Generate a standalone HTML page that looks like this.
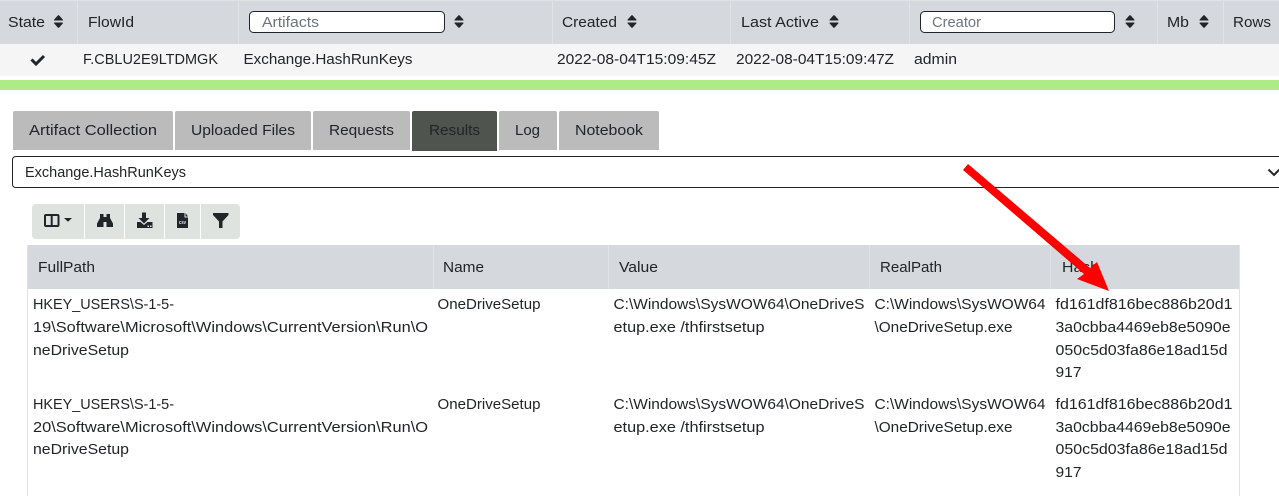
<!DOCTYPE html>
<html>
<head>
<meta charset="utf-8">
<style>
html,body{margin:0;padding:0;width:1279px;height:496px;overflow:hidden;background:#fff}
svg{display:block}
text{font-family:"Liberation Sans",sans-serif;font-size:14.6px;fill:#212529}
.t{font-size:15.2px}
.p{fill:#6c757d}
</style>
</head>
<body>
<svg width="1279" height="496" viewBox="0 0 1279 496" xmlns="http://www.w3.org/2000/svg">
<defs>
<g id="sort"><path d="M-3.800 -1 H3.800 Q4.900 -1 4.300 -2 L0.700 -6 Q0 -6.800 -0.700 -6 L-4.300 -2 Q-4.900 -1 -3.800 -1Z M-3.800 1 H3.800 Q4.900 1 4.300 2 L0.700 6 Q0 6.800 -0.700 6 L-4.300 2 Q-4.900 1 -3.800 1Z" fill="#212529"/></g>
</defs>

<!-- Top table header -->
<rect x="0" y="0" width="1279" height="44" fill="#d5d8dc"/>
<rect x="0" y="0" width="1279" height="1" fill="#e0e4e4"/>
<g fill="#dfe3e5">
<rect x="77" y="0" width="1" height="44"/><rect x="238" y="0" width="1" height="44"/><rect x="552" y="0" width="1" height="44"/><rect x="730" y="0" width="1" height="44"/><rect x="909" y="0" width="1" height="44"/><rect x="1157" y="0" width="1" height="44"/><rect x="1223" y="0" width="1" height="44"/>
</g>
<text x="8" y="27" textLength="37" lengthAdjust="spacingAndGlyphs">State</text>
<use href="#sort" x="58.500" y="21.500"/>
<text x="88" y="27" textLength="46" lengthAdjust="spacingAndGlyphs">FlowId</text>
<rect x="249.500" y="11.500" width="195" height="21" rx="4" fill="#fff" stroke="#212529"/>
<text class="p" x="262" y="27" textLength="57" lengthAdjust="spacingAndGlyphs">Artifacts</text>
<use href="#sort" x="459" y="21.500"/>
<text x="562" y="27" textLength="55" lengthAdjust="spacingAndGlyphs">Created</text>
<use href="#sort" x="632" y="21.500"/>
<text x="741" y="27" textLength="78" lengthAdjust="spacingAndGlyphs">Last Active</text>
<use href="#sort" x="834" y="21.500"/>
<rect x="920.500" y="11.500" width="194" height="21" rx="4" fill="#fff" stroke="#212529"/>
<text class="p" x="932" y="27" textLength="49" lengthAdjust="spacingAndGlyphs">Creator</text>
<use href="#sort" x="1130" y="21.500"/>
<text x="1167" y="27" textLength="22" lengthAdjust="spacingAndGlyphs">Mb</text>
<use href="#sort" x="1204" y="21.500"/>
<text x="1233" y="27" textLength="38" lengthAdjust="spacingAndGlyphs">Rows</text>

<!-- Row -->
<rect x="0" y="44" width="1279" height="32" fill="#f5f5f5"/>
<path d="M31.500 59.500 L36 64 L44 56" fill="none" stroke="#212529" stroke-width="3"/>
<text x="83" y="64" textLength="135" lengthAdjust="spacingAndGlyphs">F.CBLU2E9LTDMGK</text>
<text x="243.500" y="64" textLength="169" lengthAdjust="spacingAndGlyphs">Exchange.HashRunKeys</text>
<text x="557" y="64" textLength="159" lengthAdjust="spacingAndGlyphs">2022-08-04T15:09:45Z</text>
<text x="736" y="64" textLength="158" lengthAdjust="spacingAndGlyphs">2022-08-04T15:09:47Z</text>
<text x="914" y="64" textLength="43" lengthAdjust="spacingAndGlyphs">admin</text>

<!-- Green bar -->
<rect x="0" y="80" width="1279" height="10" fill="#aeea85"/>

<!-- Tabs -->
<g fill="#bbbbbb">
<path d="M13 150V113q0-2 2-2H171q2 0 2 2V150Z"/>
<path d="M175 150V113q0-2 2-2H309q2 0 2 2V150Z"/>
<path d="M313 150V113q0-2 2-2H408q2 0 2 2V150Z"/>
<path d="M499 150V113q0-2 2-2H555q2 0 2 2V150Z"/>
<path d="M559 150V113q0-2 2-2H657q2 0 2 2V150Z"/>
</g>
<path d="M412 151V113q0-2 2-2H495q2 0 2 2V151Z" fill="#50544f"/>
<text class="t" x="29" y="135" textLength="128" lengthAdjust="spacingAndGlyphs">Artifact Collection</text>
<text class="t" x="191" y="135" textLength="104" lengthAdjust="spacingAndGlyphs">Uploaded Files</text>
<text class="t" x="329" y="135" textLength="65" lengthAdjust="spacingAndGlyphs">Requests</text>
<text class="t" x="429" y="135" textLength="51" lengthAdjust="spacingAndGlyphs">Results</text>
<text class="t" x="515" y="135" textLength="25" lengthAdjust="spacingAndGlyphs">Log</text>
<text class="t" x="575" y="135" textLength="68" lengthAdjust="spacingAndGlyphs">Notebook</text>

<!-- Select -->
<path d="M1285 156.500H16q-3.500 0-3.500 3.500V184q0 3.500 3.500 3.500H1285" fill="#fff" stroke="#212529"/>
<text x="25" y="177" textLength="161" lengthAdjust="spacingAndGlyphs">Exchange.HashRunKeys</text>
<path d="M1268.500 169.500 L1274 175 L1279.500 169.500" fill="none" stroke="#212529" stroke-width="2"/>

<!-- Toolbar -->
<path d="M36 204H84V239H36q-4 0-4-4V208q0-4 4-4Z" fill="#dfe3e0"/>
<rect x="85" y="204" width="39" height="35" fill="#dfe3e0"/>
<rect x="125" y="204" width="39" height="35" fill="#dfe3e0"/>
<rect x="165" y="204" width="35" height="35" fill="#dfe3e0"/>
<path d="M201 204H236q4 0 4 4V235q0 4-4 4H201Z" fill="#dfe3e0"/>
<!-- columns icon -->
<rect x="45" y="215" width="13.500" height="11" rx="1" fill="none" stroke="#212529" stroke-width="2"/>
<rect x="50.700" y="215" width="2" height="11" fill="#212529"/>
<path d="M64 218H72L68 221.800Z" fill="#212529"/>
<!-- binoculars -->
<path d="M100 214h3.500v13h-6.500v-3.500l3-5.500Z" fill="#212529"/>
<path d="M110 214h-3.500v13h6.500v-3.500l-3-5.500Z" fill="#212529"/>
<rect x="103" y="217" width="4" height="5" fill="#212529"/>
<!-- download -->
<path d="M142 212.500h4v5.500h3.500l-5.500 5.500-5.500-5.500h3.500Z" fill="#212529"/>
<path d="M137 222h3.500l3.500 3 3.500-3h5v6h-15.500Z" fill="#212529"/>
<rect x="147.500" y="225.500" width="1.500" height="1.500" fill="#dfe3e0"/><rect x="150" y="225.500" width="1.500" height="1.500" fill="#dfe3e0"/>
<!-- csv -->
<path d="M177 213h7.500v4.500h3.500v10.500h-11Z" fill="#212529"/>
<path d="M185.500 213l2.500 3.500h-2.500Z" fill="#212529"/>
<text x="179" y="224" textLength="7" lengthAdjust="spacingAndGlyphs" style="font-size:5.500px;font-weight:bold;fill:#dfe3e0">csv</text>
<!-- filter -->
<path d="M213 213h15.500v2l-6 6.500V228h-3.500v-6.500l-6-6.500Z" fill="#212529"/>

<!-- Results table -->
<rect x="27" y="245" width="1213" height="44" fill="#d5d8dc"/>
<g fill="#dfe3e5">
<rect x="433" y="245" width="1" height="44"/><rect x="608" y="245" width="1" height="44"/><rect x="869" y="245" width="1" height="44"/><rect x="1050" y="245" width="1" height="44"/>
<rect x="27" y="245" width="1" height="251"/><rect x="1239" y="245" width="1" height="251"/>
</g>
<text x="38" y="272" textLength="57" lengthAdjust="spacingAndGlyphs">FullPath</text>
<text x="443" y="272" textLength="41" lengthAdjust="spacingAndGlyphs">Name</text>
<text x="619" y="272" textLength="39" lengthAdjust="spacingAndGlyphs">Value</text>
<text x="880" y="272" textLength="62" lengthAdjust="spacingAndGlyphs">RealPath</text>
<text x="1062" y="272" textLength="37" lengthAdjust="spacingAndGlyphs">Hash</text>

<text x="33" y="309" textLength="141" lengthAdjust="spacingAndGlyphs">HKEY_USERS\S-1-5-</text>
<text x="33" y="332" textLength="395" lengthAdjust="spacingAndGlyphs">19\Software\Microsoft\Windows\CurrentVersion\Run\O</text>
<text x="33" y="355" textLength="96" lengthAdjust="spacingAndGlyphs">neDriveSetup</text>
<text x="437.500" y="309" textLength="103" lengthAdjust="spacingAndGlyphs">OneDriveSetup</text>
<text x="613.500" y="309" textLength="251" lengthAdjust="spacingAndGlyphs">C:\Windows\SysWOW64\OneDriveS</text>
<text x="613.500" y="332" textLength="151" lengthAdjust="spacingAndGlyphs">etup.exe /thfirstsetup</text>
<text x="874.500" y="309" textLength="171" lengthAdjust="spacingAndGlyphs">C:\Windows\SysWOW64</text>
<text x="874.500" y="332" textLength="138" lengthAdjust="spacingAndGlyphs">\OneDriveSetup.exe</text>
<text x="1055.500" y="309" textLength="177" lengthAdjust="spacingAndGlyphs">fd161df816bec886b20d1</text>
<text x="1055.500" y="332" textLength="175" lengthAdjust="spacingAndGlyphs">3a0cbba4469eb8e5090e</text>
<text x="1055.500" y="355" textLength="172" lengthAdjust="spacingAndGlyphs">050c5d03fa86e18ad15d</text>
<text x="1055.500" y="377" textLength="26" lengthAdjust="spacingAndGlyphs">917</text>

<text x="33" y="409" textLength="141" lengthAdjust="spacingAndGlyphs">HKEY_USERS\S-1-5-</text>
<text x="33" y="432" textLength="395" lengthAdjust="spacingAndGlyphs">20\Software\Microsoft\Windows\CurrentVersion\Run\O</text>
<text x="33" y="454" textLength="96" lengthAdjust="spacingAndGlyphs">neDriveSetup</text>
<text x="437.500" y="409" textLength="103" lengthAdjust="spacingAndGlyphs">OneDriveSetup</text>
<text x="613.500" y="409" textLength="251" lengthAdjust="spacingAndGlyphs">C:\Windows\SysWOW64\OneDriveS</text>
<text x="613.500" y="432" textLength="151" lengthAdjust="spacingAndGlyphs">etup.exe /thfirstsetup</text>
<text x="874.500" y="409" textLength="171" lengthAdjust="spacingAndGlyphs">C:\Windows\SysWOW64</text>
<text x="874.500" y="432" textLength="138" lengthAdjust="spacingAndGlyphs">\OneDriveSetup.exe</text>
<text x="1055.500" y="409" textLength="177" lengthAdjust="spacingAndGlyphs">fd161df816bec886b20d1</text>
<text x="1055.500" y="432" textLength="175" lengthAdjust="spacingAndGlyphs">3a0cbba4469eb8e5090e</text>
<text x="1055.500" y="454" textLength="172" lengthAdjust="spacingAndGlyphs">050c5d03fa86e18ad15d</text>
<text x="1055.500" y="477" textLength="26" lengthAdjust="spacingAndGlyphs">917</text>

<!-- Red arrow -->
<path d="M968 164 L1090 268 L1097 262 L1109 291 L1077 279 L1084 274 L963 170Z" fill="#ff0000"/>
</svg>
</body>
</html>
